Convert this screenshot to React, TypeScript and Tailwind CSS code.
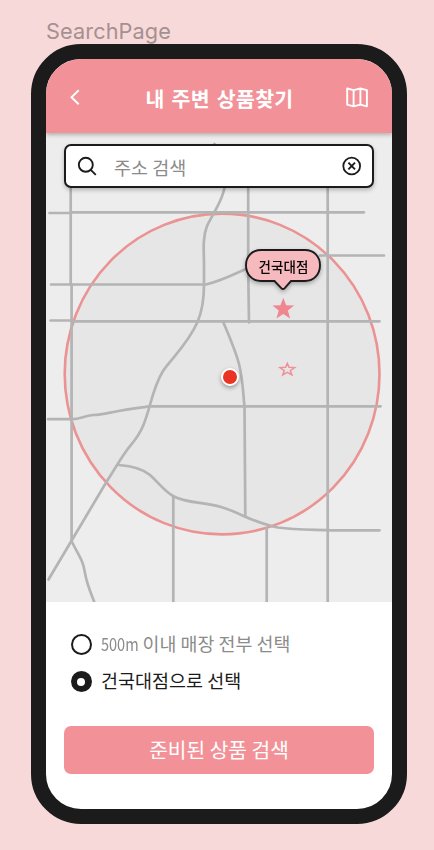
import React from "react";

const korean = "font-['Noto_Sans_CJK_KR','Noto_Sans',sans-serif]";

function Header() {
  return (
    <header className="relative z-10 flex h-[74px] shrink-0 items-center bg-[#f29298] pt-[3px] shadow-[0_2px_4px_rgba(0,0,0,0.25)]">
      <button aria-label="back" className="ml-[22px] flex h-6 w-[15px] items-center justify-center">
        <svg width="15" height="20" viewBox="0 0 15 20" fill="none" stroke="white" strokeWidth="1.9">
          <path d="M10.7 2.2 3.5 9.2l7.2 7" />
        </svg>
      </button>
      <h1 className="flex-1 whitespace-nowrap pl-[10px] text-center text-[20.5px] font-bold leading-[30px] tracking-[0.3px] [word-spacing:2px] text-white">
        내 주변 상품찾기
      </h1>
      <button aria-label="map" className="mr-[23px] flex h-6 w-[23px] items-center justify-center">
        <svg width="23" height="22" viewBox="0 0 23 22" fill="none" stroke="white" strokeWidth="1.9" strokeLinejoin="round">
          <path d="M1.2 1.500 7.600 3.100l6.800-1.600 6.500 1.600v16.200L14.400 17.700l-6.800 1.600-6.400-1.600zM7.600 3.100v16.200M14.400 1.500v16.200" />
        </svg>
      </button>
    </header>
  );
}

function SearchBar() {
  return (
    <div className="relative mx-[18px] mt-[11px] flex h-[44px] items-center rounded-[7px] border-2 border-[#1b1b1b] bg-white shadow-[0_2px_4px_rgba(0,0,0,0.25)]">
      <svg className="ml-[11px]" width="21" height="21" viewBox="0 0 21 21" fill="none" stroke="#1b1b1b" strokeWidth="1.9">
        <circle cx="8.8" cy="8.8" r="7" />
        <path d="m13.8 13.8 5 5" />
      </svg>
      <span className="ml-[16px] flex-1 whitespace-nowrap pt-px text-[18.500px] leading-[26px] text-[#8b8b8b]">주소 검색</span>
      <svg className="mr-[10px]" width="20" height="20" viewBox="0 0 20 20" fill="none" stroke="#1b1b1b" strokeWidth="1.8">
        <circle cx="9.700" cy="10" r="8.4" />
        <path strokeWidth="1.900" d="m6.400 6.700 6.600 6.600m0-6.600-6.600 6.600" />
      </svg>
    </div>
  );
}

function StreetMap() {
  return (
    <svg className="absolute inset-0" width="347" height="469" viewBox="46 133 347 469" fill="none">
      <ellipse cx="222.1" cy="374" rx="157.4" ry="160.4" fill="#e6e6e6" stroke="#eb9292" strokeWidth="2.6" />
      <g stroke="#b4b4b4" strokeWidth="2.7" strokeLinecap="round" strokeLinejoin="round">
        <path d="M49.500 213H71M71 212.300H364" />
        <path d="M70.700 180V284.500M71.600 284.500V541" />
        <path d="M51 284.500H206C221 281 232 275 246 269" />
        <path d="M50.500 320.500H71L72 321.300H379.500" />
        <path d="M48 419.200H72C80 419 84 416 93 415C101 415 108 413 116 411.500C126 409.300 138 408 149 406.300H380.500" />
        <path d="M214.500 144C220 149 226 160 226 178C225 198 213 213 207 226C203 236 203.500 247 204 262V284C204 304 201 314 197.500 322C188 344 170 360 163 371C152 389 151 407 143 426C138 438 132 443 127 450C119 461 113 472 107 481L48.500 579.500" />
        <path d="M72 542C79 556 83 560 85 573C87 585 91 593 95 604" />
        <path d="M248.200 180V269L249 322.500" />
        <path d="M327.700 180V604M320 255.500H384" />
        <path d="M223 321.500C229 336 235 349 239 364C243 380 243 393 244.500 406.500L245.300 516" />
        <path d="M119 465C132 466 142 468 150 475C158 482 163 490 173 496C185 503 203 502 221 507C239 512 253 523 278 527.500C296 530 314 529.500 332 530.300H379.500" />
        <path d="M173.300 497V604M266.700 528V604" />
      </g>
      <path fill="#ef8790" d="m283.300 297.700 2.800 7.500 8 .4-6.200 5 2.200 7.900-6.800-4.400-6.800 4.400 2.200-7.900-6.200-5 8-.4z" />
      <path stroke="#f08f97" strokeWidth="1.500" d="m287.300 363.300 1.700 4 5.600.300-4.300 3.100 1.600 4.200-4.600-2.500-4.600 2.500 1.600-4.200-4.300-3.100 5.600-.3z" />
    </svg>
  );
}

function StoreBubble() {
  return (
    <div className="absolute left-[198px] top-[115px] h-[45px] w-[78px] drop-shadow-[0_2px_2px_rgba(0,0,0,0.3)]">
      <svg className="absolute inset-0" width="78" height="45" viewBox="0 0 78 45">
        <path d="M17 2H61C70 2 76 8.500 76 17.200C76 26 70 33 61 33H47L40.500 40.300Q39 41.800 37.500 40.300L30.500 33H17C8 33 2 26 2 17.200C2 8.500 8 2 17 2Z" fill="#f6b9be" stroke="#1b1b1b" strokeWidth="1.900" />
      </svg>
      <span className="relative flex h-[36px] items-center justify-center whitespace-nowrap pl-px text-[13.500px] font-medium tracking-[0.1px] text-black">건국대점</span>
    </div>
  );
}

function Radio({ checked }: { checked?: boolean }) {
  return (
    <span
      className={
        checked
          ? "flex size-[21px] shrink-0 items-center justify-center rounded-full bg-[#1b1b1b] after:size-[8px] after:rounded-full after:bg-white after:content-['']"
          : "size-[21px] shrink-0 rounded-full border-2 border-[#1b1b1b] bg-white"
      }
    />
  );
}

export default function App() {
  return (
    <main className={`h-[850px] w-[434px] overflow-hidden bg-[#f8d9da] ${korean}`}>
      <div className="ml-[46px] h-[44px] pt-[18px] font-['Inter',sans-serif] text-[21.700px] leading-[27px] tracking-[0.1px] text-[#a59090]">SearchPage</div>
      <div className="ml-[31px] flex h-[780px] w-[376px] flex-col overflow-hidden rounded-[50px] border-[15px] border-[#1b1b1b] bg-white">
        <Header />
        <section className="relative h-[469px] shrink-0 overflow-hidden bg-[#ededed]">
          <StreetMap />
          <SearchBar />
          <StoreBubble />
          <span className="absolute left-[175px] top-[235px] size-[18px] rounded-full border-[2.500px] border-white bg-[#ea3323] shadow-[0_2px_4px_rgba(0,0,0,0.35)]" />
        </section>
        <section className="flex flex-col px-[18px] pt-[28px]">
          <div className="flex h-[29px] items-center gap-[9.500px] pl-[6.500px]">
            <Radio />
            <span className="flex items-baseline whitespace-pre pb-[3px] text-[18.400px] leading-[28px] text-[#8b8b8b]">
              <span className="w-[37.500px] origin-left scale-x-[0.83] text-[17.500px]">500m</span>
              <span> 이내 매장 전부 선택</span>
            </span>
          </div>
          <div className="mt-[8px] flex h-[29px] items-center gap-[9.500px] pl-[6.500px]">
            <Radio checked />
            <span className="whitespace-nowrap pb-[4px] text-[18.500px] leading-[28px] text-[#1b1b1b]">건국대점으로 선택</span>
          </div>
          <button className="mt-[30px] h-[48px] whitespace-nowrap rounded-[7px] bg-[#f29298] pb-[2px] text-[20.300px] text-white">준비된 상품 검색</button>
        </section>
      </div>
    </main>
  );
}
